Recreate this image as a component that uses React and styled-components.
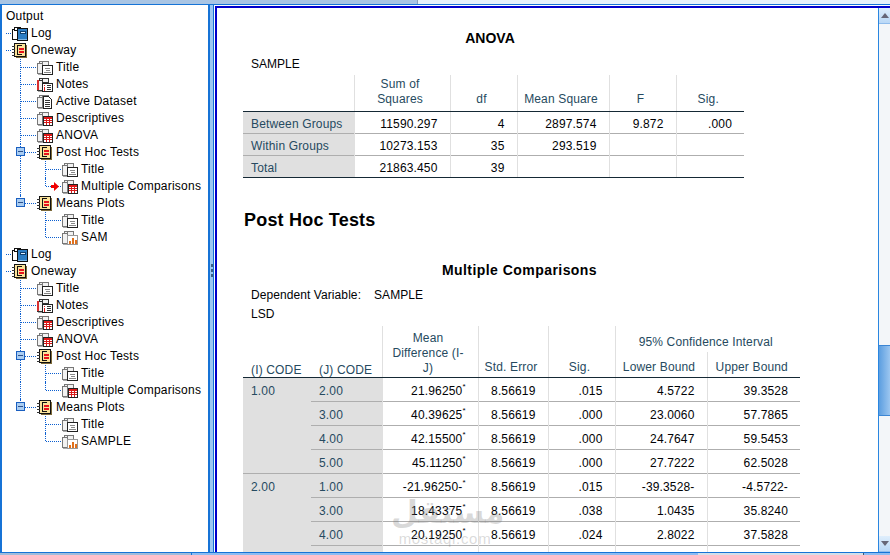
import React from "react";
import styled, { createGlobalStyle } from "styled-components";

const GlobalStyle = createGlobalStyle`
  html, body {
    margin: 0;
    padding: 0;
    background: #fff;
    font-family: "Liberation Sans", Arial, sans-serif;
  }
`;

const Window = styled.div`
  width: 890px;
  height: 555px;
  display: flex;
  flex-direction: column;
  overflow: hidden;
  position: relative;
`;

const TopStrip = styled.div`
  height: 4px;
  flex: none;
  display: flex;
  background: #e6f1fb;
`;

const TopThumb = styled.div`
  width: 417px;
  background: #a9c5e4;
  border-right: 1px solid #8aa0b8;
`;

const Body = styled.div`
  flex: 1;
  min-height: 0;
  display: flex;
  border-top: 1px solid #1673d6;
`;

const TreePane = styled.div`
  width: 206px;
  flex: none;
  border-left: 2px solid #1673d6;
  border-right: 2px solid #1673d6;
  padding-top: 3px;
  background: #fff;
  overflow: hidden;
`;

const Splitter = styled.div`
  width: 3px;
  flex: none;
  background: #9cc8f4;
  border-right: 1px solid #1673d6;
  display: flex;
  flex-direction: column;
  align-items: center;
  justify-content: center;
  gap: 2px;
  padding-bottom: 16px;
  margin-right: 1px;
`;

const Grip = styled.span`
  width: 2px;
  height: 3px;
  background: #3c5f86;
`;

const MainPane = styled.div`
  flex: 1;
  min-width: 0;
  display: flex;
  margin-top: 1px;
  border-top: 2px solid #0000cc;
  border-left: 2px solid #0000cc;
  overflow: hidden;
`;

const Sheet = styled.div`
  flex: 1;
  min-width: 0;
  padding: 21px 0 0 26px;
  position: relative;
  overflow: hidden;
`;

const TreeRow = styled.div`
  height: 17px;
  display: flex;
  align-items: stretch;
  font-size: 12px;
  letter-spacing: 0.24px;
  color: #000;
  white-space: nowrap;
`;

const Stub = styled.span`
  width: ${(p) => (p.$plain ? 2 : 9)}px;
  flex: none;
  position: relative;

  &::after {
    content: "";
    display: ${(p) => (p.$line ? "block" : "none")};
    position: absolute;
    left: 4px;
    width: 5px;
    top: 8px;
    border-top: 1px dotted #0b5fd0;
  }
`;

const Guide = styled.span`
  width: 25px;
  flex: none;
  position: relative;

  &::before {
    content: "";
    display: ${(p) => (p.$kind === "none" ? "none" : "block")};
    position: absolute;
    left: 9px;
    top: 0;
    bottom: ${(p) => (p.$kind === "elbow" || p.$kind === "end" ? "9px" : "0")};
    border-left: 1px dotted #0b5fd0;
  }

  &::after {
    content: "";
    display: ${(p) => (p.$kind === "none" || p.$kind === "pipe" ? "none" : "block")};
    position: absolute;
    left: 10px;
    right: 0;
    top: 8px;
    border-top: 1px dotted #0b5fd0;
  }
`;

const Toggle = styled.span`
  position: absolute;
  z-index: 1;
  left: 5px;
  top: 3px;
  width: 7px;
  height: 7px;
  border: 1px solid #1a5fc0;
  background: #a9cdf2;

  &::after {
    content: "";
    position: absolute;
    left: 1px;
    right: 1px;
    top: 3px;
    border-top: 1px solid #2c4f8c;
  }
`;

const Marker = styled.svg`
  position: absolute;
  z-index: 1;
  left: 15px;
  top: 4px;
`;

const IconSlot = styled.svg`
  width: 18px;
  height: 17px;
  flex: none;
`;

const Label = styled.span`
  line-height: 17px;
  margin-left: 2px;
`;

const TitleLine = styled.div`
  width: ${(p) => p.$width}px;
  text-align: center;
  font-weight: bold;
  font-size: 14px;
  line-height: 18px;
  color: #000;
  letter-spacing: ${(p) => p.$spacing || 0}px;
  margin-top: ${(p) => p.$top || 0}px;
`;

const Heading = styled.div`
  font-weight: bold;
  font-size: 18px;
  letter-spacing: 0.2px;
  line-height: 22px;
  margin: 31px 0 0 1px;
  color: #000;
`;

const NoteLine = styled.div`
  font-size: 12px;
  line-height: 15px;
  letter-spacing: ${(p) => p.$spacing || 0}px;
  color: #010205;
  padding-left: 8px;
  margin-top: ${(p) => p.$top}px;
  display: flex;
`;

const NoteKey = styled.span`
  width: 123px;
  flex: none;
`;

const Grid = styled.table`
  table-layout: fixed;
  border-collapse: collapse;
  width: ${(p) => p.$width}px;
  margin-top: ${(p) => p.$top}px;
  font-size: 12px;
  letter-spacing: 0.15px;
  line-height: 15px;
`;

const Head = styled.th`
  font-weight: normal;
  color: #264a60;
  vertical-align: ${(p) => p.$valign || "bottom"};
  text-align: ${(p) => (p.$left ? "left" : "center")};
  padding: ${(p) => p.$pt || 0}px ${(p) => (p.$left ? 0 : 6)}px ${(p) => p.$pb ?? 3}px ${(p) => (p.$left ? 8 : 2)}px;
  border-left: ${(p) => (p.$rule ? "1px solid #e0e0e0" : "none")};
  border-bottom: ${(p) => (p.$last ? "1px solid #152935" : "none")};
  line-height: ${(p) => p.$lh || 15}px;
`;

const StubCell = styled.td`
  background: #e0e0e0;
  color: #264a60;
  padding: ${(p) => (p.$top ? 6 : 4)}px 0 0 8px;
  vertical-align: ${(p) => (p.$top ? "top" : "middle")};
  border-top: ${(p) => (p.$line ? "1px solid #aeaeae" : "none")};
  border-bottom: ${(p) => (p.$bottom ? "1px solid #152935" : "none")};
`;

const Cell = styled.td`
  color: #010205;
  text-align: right;
  padding: 4px 12px 0 0;
  border-top: ${(p) => (p.$first ? "none" : "1px solid #aeaeae")};
  border-left: 1px solid #e0e0e0;
  border-bottom: ${(p) => (p.$bottom ? "1px solid #152935" : "none")};
`;

const Row = styled.tr`
  height: ${(p) => p.$h}px;
`;

const Star = styled.sup`
  font-size: 8px;
  line-height: 0;
  letter-spacing: 0;
  position: relative;
  top: -1px;
  vertical-align: super;
`;

const Watermark = styled.div`
  position: absolute;
  left: 174px;
  top: 485px;
  width: 108px;
  text-align: center;
  color: rgba(120, 120, 120, 0.28);
  pointer-events: none;
`;

const WatermarkArabic = styled.div`
  font-family: "DejaVu Sans", sans-serif;
  font-weight: bold;
  font-size: 31px;
  line-height: 38px;
`;

const WatermarkLatin = styled.div`
  font-size: 15px;
  line-height: 15px;
  letter-spacing: 0.7px;
`;

const ScrollColumn = styled.div`
  width: 11px;
  flex: none;
  border-left: 1px solid #2a86e0;
  background: #f3f6f9;
  display: flex;
  flex-direction: column;
`;

const ArrowButton = styled.div`
  height: 15px;
  flex: none;
  background: linear-gradient(#dfeefc, #b9d8f6);
  display: flex;
  align-items: center;
  justify-content: center;
  border-bottom: 1px solid #8fbcec;
`;

const Track = styled.div`
  flex: 1;
  padding-top: 321px;
`;

const Thumb = styled.div`
  height: 69px;
  background: linear-gradient(90deg, #5c9ee0, #9cc6f0);
  border-top: 1px solid #3c86d4;
  border-bottom: 1px solid #3c86d4;
`;

const BottomBar = styled.div`
  height: 2px;
  flex: none;
  display: flex;
  border-top: 1px solid #1673d6;
  background: #8dbcf2;
`;

const BottomLeft = styled.div`
  width: 191px;
  background: #9fbcdc;
  border-right: 1px solid #1673d6;
`;

const BottomGap = styled.div`
  width: 506px;
`;

const BottomThumb = styled.div`
  width: 165px;
  background: #d3dfea;
  border-right: 1px solid #44586e;
`;

// gray open book sitting behind most of the outline icons
const Glyph = ({ kind }) => {
  if (kind === "book") {
    return (
      <IconSlot viewBox="0 0 18 17" shapeRendering="crispEdges">
        <path d="M1.500 4.500h5v10h-5z" fill="#fff" stroke="#111" />
        <path d="M3.500 2.500h6v3h-6z" fill="#fff" stroke="#111" />
        <path d="M6.500 3.500h10v12h-10z" fill="#2b7dc4" stroke="#111" />
        <path d="M9.500 6.500h5v2h-5z" fill="#dff0ff" stroke="#0c3f70" />
        <path d="M7 14h9v1H7z" fill="#7fb8e6" />
      </IconSlot>
    );
  }
  if (kind === "section") {
    return (
      <IconSlot viewBox="0 0 18 17" shapeRendering="crispEdges">
        <path d="M5 3h11v13H5z" fill="#7d6a3a" />
        <path d="M3.500 1.500h11v13h-11z" fill="#fbe39a" stroke="#111" />
        <path d="M1 4.500h3M1 7.500h3M1 10.500h3M1 13.500h3" stroke="#333" />
        <path d="M11 3.500H6.500v8.500H11" stroke="#111" fill="none" />
        <path d="M8 6h5v2H8zM8 9h5v2H8z" fill="#e8121c" />
      </IconSlot>
    );
  }
  const overlay = {
    title: (
      <>
        <path d="M6.500 6.500h10v9h-10z" fill="#fff" stroke="#222" />
        <path d="M9 9h5M10 11h4M8 13h7" stroke="#888" />
      </>
    ),
    notes: (
      <>
        <path d="M1 4h2v10H1z" fill="#d83030" />
        <path d="M6.500 7.500h10v8h-10z" fill="#fff" stroke="#222" />
        <path d="M8 9h1v1H8zM8 11h1v4H8z" fill="#e01818" />
        <path d="M11 9.500h4M11 11.500h4M11 13.500h4" stroke="#333" />
      </>
    ),
    dataset: (
      <>
        <path d="M7.500 3.500h5l3 3v9h-8z" fill="#fff" stroke="#222" />
        <path d="M9 7.500h5M9 9.500h5M9 11.500h5M9 13.500h5" stroke="#333" />
      </>
    ),
    table: (
      <>
        <path d="M7.500 6.500h9v9h-9z" fill="#fff" stroke="#222" />
        <path d="M8 7h8v2H8z" fill="#e01818" />
        <path d="M10.500 9v6M13.500 9v6M8 10.500h8M8 12.500h8" stroke="#d81818" />
      </>
    ),
    chart: (
      <>
        <path d="M6.500 6.500h10v9h-10z" fill="#fff" stroke="#999" />
        <path d="M8 12h2v3H8z" fill="#e0701c" />
        <path d="M11 9h2v6h-2z" fill="#e0701c" />
        <path d="M14 11h2v4h-2z" fill="#e0701c" />
      </>
    )
  }[kind];
  const line = kind === "notes" ? "#333" : "#777";
  return (
    <IconSlot viewBox="0 0 18 17" shapeRendering="crispEdges">
      <path d="M1.500 4.500h5v10h-5z" fill="#f2f2f2" stroke={line} />
      <path d="M3.500 2.500h3v2h-3zM6.500 2.500h6v4h-6z" fill="#f2f2f2" stroke={line} />
      <path d="M2 15h5v1H2z" fill="#aaa" />
      {overlay}
    </IconSlot>
  );
};

const outlineGroup = (plotName, withDataset) => [
  { depth: 1, icon: "book", text: "Log" },
  { depth: 1, icon: "section", text: "Oneway" },
  { depth: 2, kind: "tee", icon: "title", text: "Title" },
  { depth: 2, kind: "tee", icon: "notes", text: "Notes" },
  ...(withDataset ? [{ depth: 2, kind: "tee", icon: "dataset", text: "Active Dataset" }] : []),
  { depth: 2, kind: "tee", icon: "table", text: "Descriptives" },
  { depth: 2, kind: "tee", icon: "table", text: "ANOVA" },
  { depth: 2, kind: "toggle", icon: "section", text: "Post Hoc Tests" },
  { depth: 3, outer: "pipe", kind: "tee", icon: "title", text: "Title" },
  { depth: 3, outer: "pipe", kind: "elbow", icon: "table", text: "Multiple Comparisons", current: withDataset },
  { depth: 2, kind: "end", toggle: true, icon: "section", text: "Means Plots" },
  { depth: 3, outer: "none", kind: "tee", icon: "title", text: "Title" },
  { depth: 3, outer: "none", kind: "elbow", icon: "chart", text: plotName }
];

const outline = [...outlineGroup("SAM", true), ...outlineGroup("SAMPLE", false)];

const OutlineRow = ({ row }) => (
  <TreeRow>
    <Stub $line={row.depth === 1} />
    {row.depth === 2 && (
      <Guide $kind={row.kind === "toggle" ? "tee" : row.kind}>
        {(row.kind === "toggle" || row.toggle) && <Toggle />}
      </Guide>
    )}
    {row.depth === 3 && <Guide $kind={row.outer} />}
    {row.depth === 3 && (
      <Guide $kind={row.kind}>
        {row.current && (
          <Marker width="9" height="9" viewBox="0 0 9 9">
            <path d="M0 3h3V0l5 4.500-5 4.500V6H0z" fill="#f00000" />
          </Marker>
        )}
      </Guide>
    )}
    <Glyph kind={row.icon} />
    <Label>{row.text}</Label>
  </TreeRow>
);

const anovaRows = [
  ["Between Groups", "11590.297", "4", "2897.574", "9.872", ".000"],
  ["Within Groups", "10273.153", "35", "293.519", "", ""],
  ["Total", "21863.450", "39", "", "", ""]
];

const comparisonGroups = [
  {
    code: "1.00",
    rows: [
      ["2.00", "21.96250", ".015", "4.5722", "39.3528"],
      ["3.00", "40.39625", ".000", "23.0060", "57.7865"],
      ["4.00", "42.15500", ".000", "24.7647", "59.5453"],
      ["5.00", "45.11250", ".000", "27.7222", "62.5028"]
    ]
  },
  {
    code: "2.00",
    rows: [
      ["1.00", "-21.96250-", ".015", "-39.3528-", "-4.5722-"],
      ["3.00", "18.43375", ".038", "1.0435", "35.8240"],
      ["4.00", "20.19250", ".024", "2.8022", "37.5828"],
      ["5.00", "", "", "", ""]
    ]
  }
];

const AnovaTable = () => (
  <Grid $width={501} $top={3}>
    <colgroup>
      <col width="111" />
      <col width="96" />
      <col width="67" />
      <col width="92" />
      <col width="67" />
      <col width="68" />
    </colgroup>
    <thead>
      <Row $h={36}>
        <Head $last />
        <Head $last $rule $pb={4}>
          Sum of
          <br />
          Squares
        </Head>
        <Head $last $rule $pb={4}>df</Head>
        <Head $last $rule $pb={4}>Mean Square</Head>
        <Head $last $rule $pb={4}>F</Head>
        <Head $last $rule $pb={4}>Sig.</Head>
      </Row>
    </thead>
    <tbody>
      {anovaRows.map((row, i) => (
        <Row $h={22} key={row[0]}>
          <StubCell $line={i > 0} $bottom={i === 2}>{row[0]}</StubCell>
          {row.slice(1).map((value, j) => (
            <Cell key={j} $first={i === 0} $bottom={i === 2}>
              {value}
            </Cell>
          ))}
        </Row>
      ))}
    </tbody>
  </Grid>
);

const ComparisonTable = () => (
  <Grid $width={557} $top={4}>
    <colgroup>
      <col width="68" />
      <col width="71" />
      <col width="96" />
      <col width="70" />
      <col width="67" />
      <col width="92" />
      <col width="93" />
    </colgroup>
    <thead>
      <Row $h={26}>
        <Head rowSpan={2} $left $last $pb={0} $lh={13}>(I) CODE</Head>
        <Head rowSpan={2} $left $last $pb={0} $lh={13}>(J) CODE</Head>
        <Head rowSpan={2} $last $rule $pb={1}>
          Mean
          <br />
          Difference (I-
          <br />
          J)
        </Head>
        <Head rowSpan={2} $last $rule $pb={2}>Std. Error</Head>
        <Head rowSpan={2} $last $rule $pb={2}>Sig.</Head>
        <Head colSpan={2} $rule $valign="middle" $pb={0} $pt={8}>95% Confidence Interval</Head>
      </Row>
      <Row $h={26}>
        <Head $last $rule $pb={2}>Lower Bound</Head>
        <Head $last $rule $pb={2}>Upper Bound</Head>
      </Row>
    </thead>
    <tbody>
      {comparisonGroups.map((group, g) =>
        group.rows.map((row, i) => {
          const first = g === 0 && i === 0;
          return (
            <Row $h={24} key={group.code + row[0]}>
              {i === 0 && (
                <StubCell rowSpan={4} $top $line={g > 0}>
                  {group.code}
                </StubCell>
              )}
              <StubCell $line={g > 0 || i > 0}>{row[0]}</StubCell>
              <Cell $first={first}>
                {row[1]}
                <Star>*</Star>
              </Cell>
              <Cell $first={first}>{row[1] && "8.56619"}</Cell>
              <Cell $first={first}>{row[2]}</Cell>
              <Cell $first={first}>{row[3]}</Cell>
              <Cell $first={first}>{row[4]}</Cell>
            </Row>
          );
        })
      )}
    </tbody>
  </Grid>
);

export default function App() {
  return (
    <Window>
      <GlobalStyle />
      <TopStrip>
        <TopThumb />
      </TopStrip>
      <Body>
        <TreePane>
          <TreeRow>
            <Stub $plain />
            <Label>Output</Label>
          </TreeRow>
          {outline.map((row, i) => (
            <OutlineRow row={row} key={i} />
          ))}
        </TreePane>
        <Splitter>
          <Grip />
          <Grip />
          <Grip />
        </Splitter>
        <MainPane>
          <Sheet>
            <TitleLine $width={494}>ANOVA</TitleLine>
            <NoteLine $top={10}>SAMPLE</NoteLine>
            <AnovaTable />
            <Heading>Post Hoc Tests</Heading>
            <TitleLine $width={553} $top={30} $spacing={0.45}>Multiple Comparisons</TitleLine>
            <NoteLine $top={9} $spacing={0.08}>
              <NoteKey>Dependent Variable:</NoteKey>
              SAMPLE
            </NoteLine>
            <NoteLine $top={4}>LSD</NoteLine>
            <ComparisonTable />
            <Watermark>
              <WatermarkArabic>مستقل</WatermarkArabic>
              <WatermarkLatin>mostaql.com</WatermarkLatin>
            </Watermark>
          </Sheet>
          <ScrollColumn>
            <ArrowButton>
              <svg width="8" height="5" viewBox="0 0 8 5">
                <path d="M4 0l4 5H0z" fill="#667" />
              </svg>
            </ArrowButton>
            <Track>
              <Thumb />
            </Track>
            <ArrowButton>
              <svg width="8" height="5" viewBox="0 0 8 5">
                <path d="M0 0h8L4 5z" fill="#667" />
              </svg>
            </ArrowButton>
          </ScrollColumn>
        </MainPane>
      </Body>
      <BottomBar>
        <BottomLeft />
        <BottomGap />
        <BottomThumb />
      </BottomBar>
    </Window>
  );
}
